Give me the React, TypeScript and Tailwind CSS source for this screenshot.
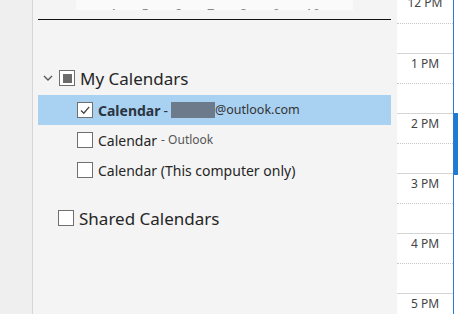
import React from 'react';

const font = { fontFamily: '"Noto Sans", "Open Sans", sans-serif' };

function Check({ checked, partial }: { checked?: boolean; partial?: boolean }) {
  return (
    <span className="flex h-[16px] w-[16px] shrink-0 items-center justify-center border border-[#6f6f6f] bg-white">
      {partial && <span className="h-[9px] w-[9px] bg-[#6b6b6b]" />}
      {checked && (
        <svg width="12" height="12" viewBox="0 0 12 12" fill="none">
          <path d="M2 6.5 L4.8 9.2 L10.2 2.8" stroke="#444" strokeWidth="1.3" />
        </svg>
      )}
    </span>
  );
}

const days = ['4', '5', '6', '7', '8', '9', '10'];
const hours = ['1 PM', '2 PM', '3 PM', '4 PM', '5 PM'];

export default function App() {
  return (
    <div className="flex h-[314px] w-[458px] overflow-hidden bg-white text-[#262626]" style={font}>
      <div className="w-[33px] shrink-0 border-r border-[#d6d6d6] bg-[#efefef]" />

      <div className="flex w-[364px] shrink-0 flex-col bg-[#f4f4f4] pl-[5px] pr-[6px]">
        <div className="ml-[38px] flex h-[10px] w-[277px] items-end justify-around overflow-hidden bg-[#fafafa] px-[20px]">
          {days.map((d) => (
            <span key={d} className="mb-[-11px] text-[13px] leading-[15px] text-[#8a8a8a]">
              {d}
            </span>
          ))}
        </div>
        <div className="mt-[9px] h-px bg-[#111]" />

        <div className="mt-[48px] flex h-[20px] items-center">
          <svg className="ml-[5px] mr-[6px]" width="10" height="10" viewBox="0 0 10 10" fill="none">
            <path d="M1 3 L5 7 L9 3" stroke="#555" strokeWidth="1.3" />
          </svg>
          <Check partial />
          <span className="ml-[5px] text-[17px] leading-none">My Calendars</span>
        </div>

        <div className="mt-[7px] flex h-[30px] items-center bg-[#a9d1f1] pl-[39px] text-[14px]">
          <Check checked />
          <span className="ml-[5px] font-bold text-[#2b3440]">Calendar</span>
          <span className="ml-[3px] text-[#333]">-</span>
          <span className="ml-[3px] h-[16px] w-[44px] bg-[#6c7a8c]" />
          <span className="text-[12.5px] text-[#333]">@outlook.com</span>
        </div>

        <div className="flex h-[30px] items-center pl-[39px] text-[14px]">
          <Check />
          <span className="ml-[5px]">Calendar</span>
          <span className="ml-[4px] text-[12px] text-[#555]">- Outlook</span>
        </div>

        <div className="flex h-[30px] items-center pl-[39px] text-[14px]">
          <Check />
          <span className="ml-[5px]">Calendar (This computer only)</span>
        </div>

        <div className="mt-[23px] flex h-[20px] items-center pl-[20px]">
          <Check />
          <span className="ml-[5px] text-[17px] leading-none">Shared Calendars</span>
        </div>
      </div>

      <div className="mt-[-7px] flex w-[57px] shrink-0 flex-col border-r border-[#2b7cd3] bg-white">
        <div className="h-[60px] shrink-0">
          <div className="pt-[3px] text-center text-[12px] leading-[14px] text-[#444]">12 PM</div>
          <div className="mt-[13px] border-t border-dotted border-[#c8c8c8]" />
        </div>
        {hours.map((h) => (
          <div key={h} className="h-[60px] shrink-0 border-t border-[#d4d4d4]">
            <div className="pt-[3px] text-center text-[12px] leading-[14px] text-[#444]">{h}</div>
            <div className="mt-[12px] border-t border-dotted border-[#c8c8c8]" />
          </div>
        ))}
      </div>

      <div className="flex flex-1 flex-col bg-white">
        <div className="mt-[113px] h-[62px] bg-[#1e7ad4]" />
      </div>
    </div>
  );
}
